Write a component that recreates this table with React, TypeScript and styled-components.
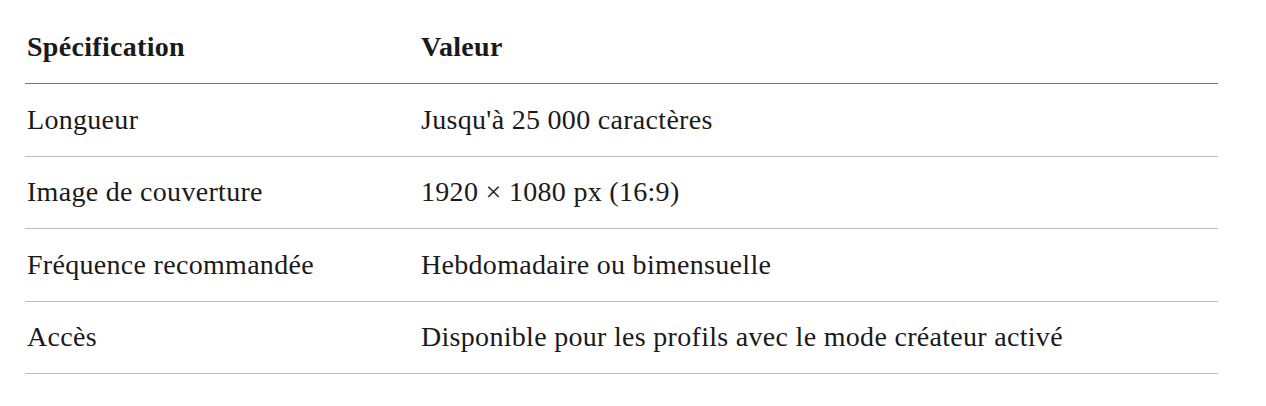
import styled, { createGlobalStyle } from "styled-components";

const GlobalStyle = createGlobalStyle`
  body {
    margin: 0;
    background: #ffffff;
    font-family: "Liberation Serif", "Times New Roman", serif;
    color: #1a1a1a;
  }
`;

const rows = [
  { spec: "Longueur", value: "Jusqu'à 25 000 caractères" },
  { spec: "Image de couverture", value: "1920 × 1080 px (16:9)" },
  { spec: "Fréquence recommandée", value: "Hebdomadaire ou bimensuelle" },
  { spec: "Accès", value: "Disponible pour les profils avec le mode créateur activé" },
];

function App() {
  return (
    <>
      <GlobalStyle />
      <Page>
        <Table>
          <thead>
            <tr>
              <HeadCell>Spécification</HeadCell>
              <HeadCell>Valeur</HeadCell>
            </tr>
          </thead>
          <tbody>
            {rows.map((r) => (
              <Row key={r.spec}>
                <Cell>{r.spec}</Cell>
                <Cell>{r.value}</Cell>
              </Row>
            ))}
          </tbody>
        </Table>
      </Page>
    </>
  );
}

export default App;

const Page = styled.div`
  padding: 11px 48px 0 25px;
`;

const Table = styled.table`
  width: 1193px;
  border-collapse: collapse;
  font-size: 28px;
  letter-spacing: 0.3px;
`;

const HeadCell = styled.th`
  height: 72px;
  padding: 0 0 0 2px;
  text-align: left;
  font-weight: 700;
  vertical-align: middle;
  border-bottom: 1px solid #767676;
  &:first-child {
    width: 392px;
  }
`;

const Row = styled.tr`
  border-bottom: 1px solid #bdbdbd;
`;

const Cell = styled.td`
  height: 71.5px;
  padding: 0 0 0 2px;
  vertical-align: middle;
`;
